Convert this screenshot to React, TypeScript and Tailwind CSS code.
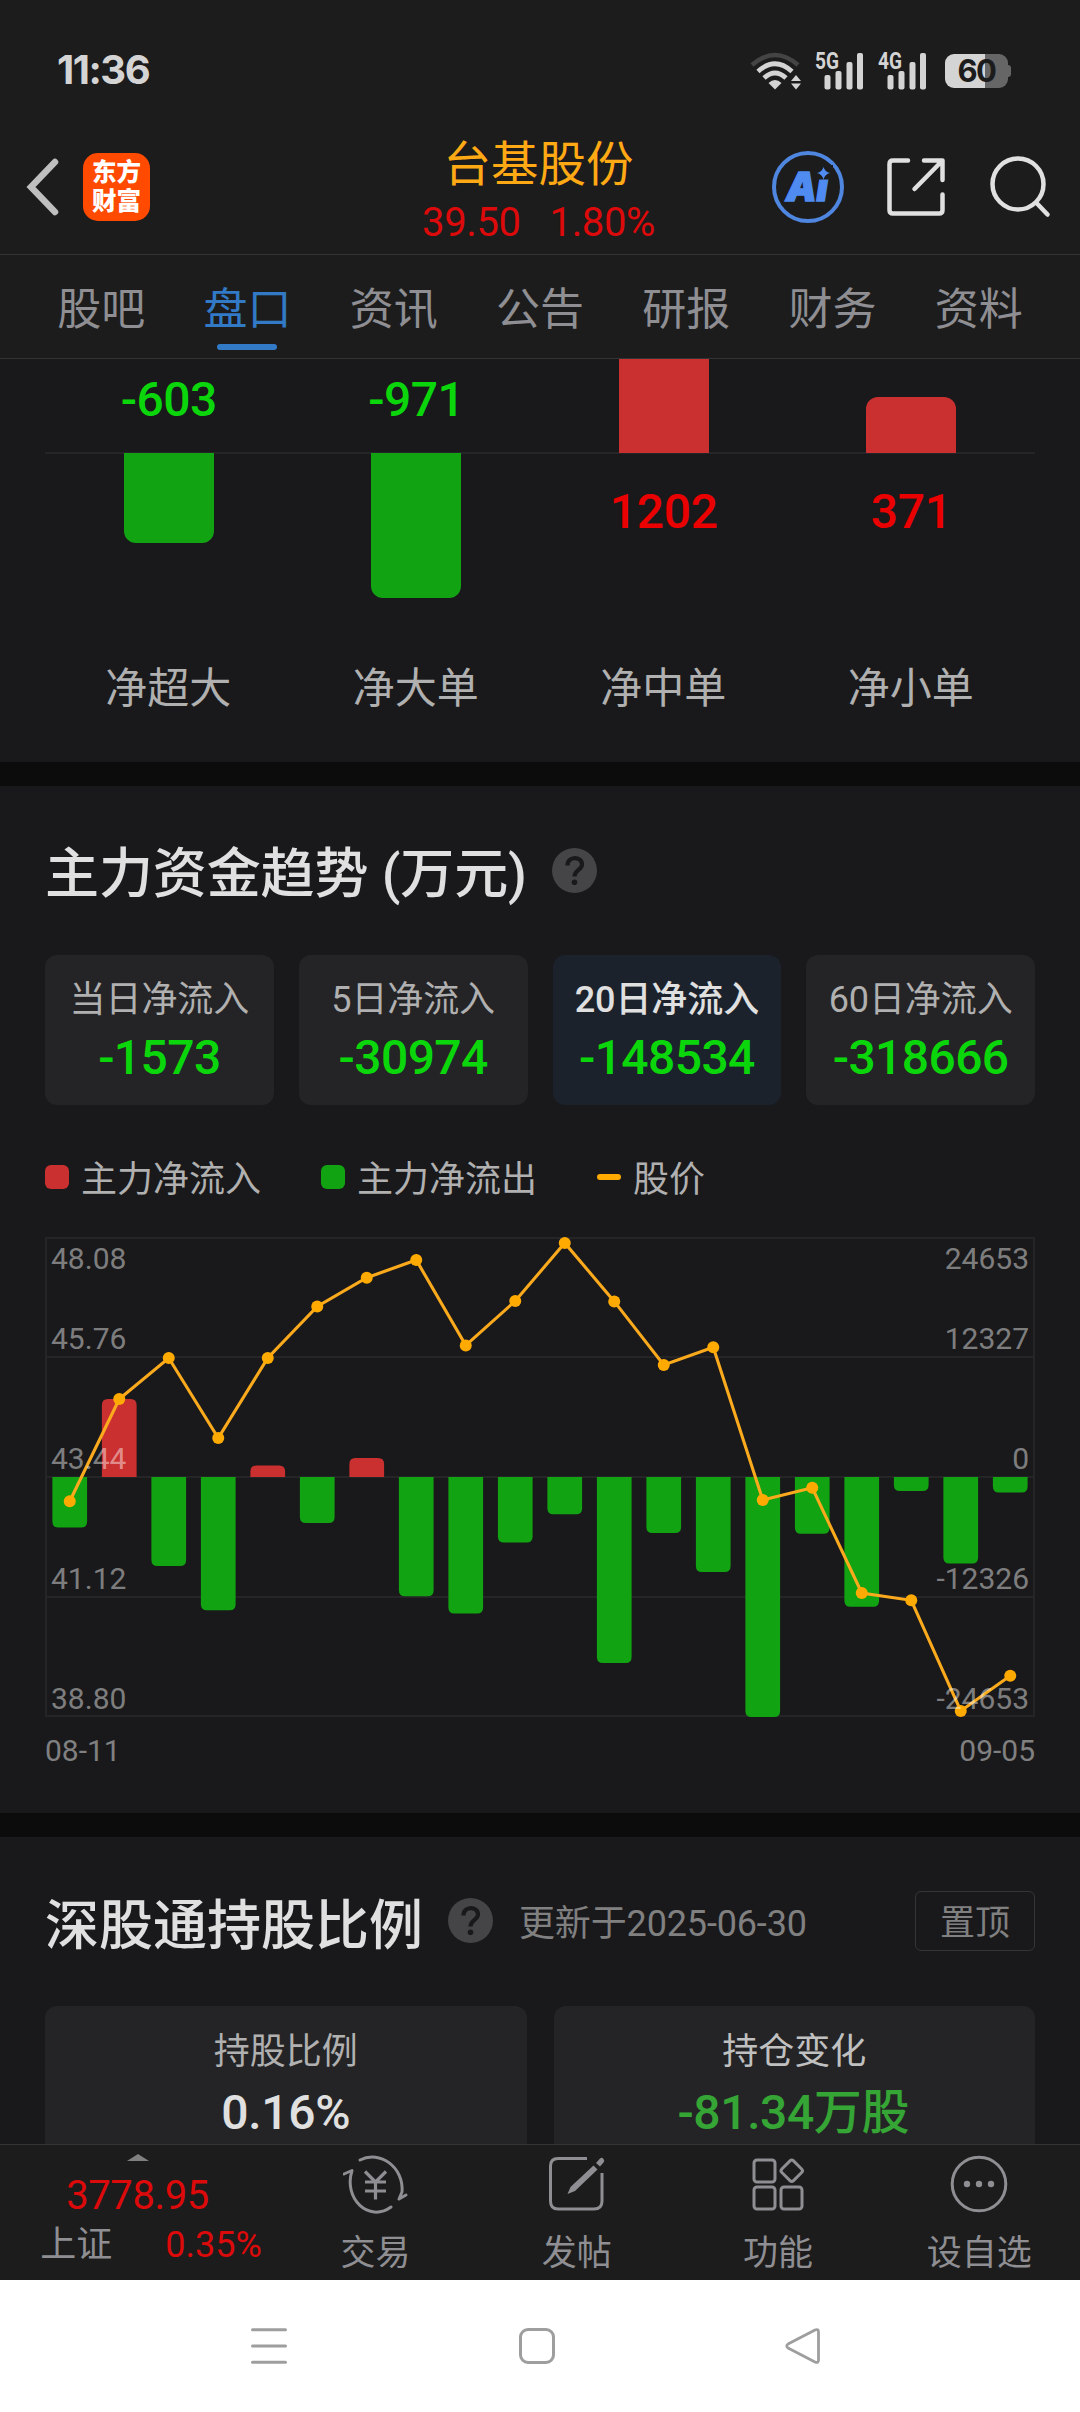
import React from 'react';
import clsx from 'clsx';

const GREEN = '#12a312';
const RED = '#cb3030';
const ORANGE = '#ffaa00';

const tabs = ['股吧', '盘口', '资讯', '公告', '研报', '财务', '资料'];

const orders = [
  { label: '净超大', value: -603, size: 90 },
  { label: '净大单', value: -971, size: 145 },
  { label: '净中单', value: 1202, size: 180 },
  { label: '净小单', value: 371, size: 56 },
];

const periods = [
  { label: '当日净流入', value: '-1573' },
  { label: '5日净流入', value: '-30974' },
  { label: '20日净流入', value: '-148534', active: true },
  { label: '60日净流入', value: '-318666' },
];

// y offsets inside the 990x480 chart, one entry per trading day
const flowEnds = [
  290.6, 162, 329, 373.3, 228.6, 286, 221, 359.2, 376.4, 305.5,
  277.2, 426.1, 296, 335, 480, 296.7, 369.8, 254, 326.6, 255.4,
];
const pricePoints = [
  264.2, 162, 121, 201, 121, 69.4, 40.7, 23, 108.4, 64,
  6, 64.4, 128, 110.3, 263, 250.8, 356, 363.3, 474, 438.7,
];
const axisRows = [
  { y: 32, left: '48.08', right: '24653' },
  { y: 112, left: '45.76', right: '12327' },
  { y: 232, left: '43.44', right: '0' },
  { y: 352, left: '41.12', right: '-12326' },
  { y: 472, left: '38.80', right: '-24653' },
];

const StatusBar: React.FC = () => (
  <div className="flex h-[140px] shrink-0 items-center justify-between pl-[57px] pr-[69px] text-[#d4d4d4]">
    <span className="font-['Inter'] text-[40px] font-bold leading-[44px] tracking-[-1.5px]">11:36</span>
    <div className="flex items-center pt-0.5">
      <svg width="52" height="38" viewBox="0 0 52 38" fill="none">
        <path d="M2 13 Q25 -7 48 13" stroke="#444" strokeWidth="4.500" />
        <path d="M8 19.500 Q25 4 42 19.500" stroke="#d4d4d4" strokeWidth="4.800" />
        <path d="M14 26 Q25 16 36 26" stroke="#d4d4d4" strokeWidth="4.800" />
        <path d="M18.500 31 Q25 25 31.500 31 L25 37.500 Z" fill="#d4d4d4" />
        <path d="M46 23 L51 29 H41 Z M46 37.500 L51 31.500 H41 Z" fill="#d4d4d4" />
      </svg>
      <Signal label="5G" />
      <Signal label="4G" />
      <div className="ml-[17px] flex items-center">
        <div className="flex h-[34px] w-[63px] items-center justify-center rounded-[9px] bg-linear-to-r from-[#d4d4d4] from-63% to-[#666] to-63%">
          <span className="font-['Inter'] text-[31px] font-bold leading-[34px] tracking-[-1.5px] text-[#1c1c1c]">60</span>
        </div>
        <div className="h-3 w-[3px] rounded-r bg-[#666]" />
      </div>
    </div>
  </div>
);

const Signal = ({ label }: { label: string }) => (
  <svg width="50" height="50" viewBox="0 -6 50 50" className="ml-[13px] overflow-visible">
    <text x="0" y="17" fontFamily="Roboto" fontSize="23" fontWeight="700" textLength="24" lengthAdjust="spacingAndGlyphs" fill="#d4d4d4">
      {label}
    </text>
    <g fill="#d4d4d4">
      <rect x="9.500" y="23" width="6" height="14.500" rx="2" />
      <rect x="20.500" y="19" width="6" height="18.500" rx="2" />
      <rect x="31.500" y="10" width="6" height="27.500" rx="2" />
      <rect x="42" y="1" width="6" height="36.500" rx="2" />
    </g>
  </svg>
);

const Header: React.FC = () => (
  <div className="grid h-[115px] shrink-0 grid-cols-[1fr_auto_1fr] border-b border-[#333] pl-[26px] pr-[29px]">
    <div className="flex items-center gap-[23px] pb-5">
      <svg width="34" height="58" viewBox="0 0 34 58" fill="none" stroke="#bfbfbf" strokeWidth="6.500">
        <path d="M29 4 L5 29 L29 54" strokeLinecap="round" />
      </svg>
      <div className="flex h-[68px] w-[67px] flex-col items-center justify-center rounded-[15px] bg-[#ff4a00] text-[24.500px] font-black leading-[29px] text-white">
        <span>东方</span>
        <span>财富</span>
      </div>
    </div>
    <div className="flex flex-col items-center">
      <div className="text-[47.500px] leading-[50px] text-[#ffa915]">台基股份</div>
      <div className="mt-[13px] flex gap-[29px] text-[40px] leading-10 tracking-[-0.4px] text-[#dc0a0a]">
        <span>39.50</span>
        <span>1.80%</span>
      </div>
    </div>
    <div className="flex items-center justify-end pb-5">
      <svg width="72" height="72" viewBox="0 0 72 72">
        <circle cx="36" cy="36" r="34" fill="none" stroke="#4f86df" strokeWidth="4" />
        <text x="14" y="49.500" fontFamily="Inter" fontSize="40" fontWeight="900" fontStyle="italic" textLength="42" lengthAdjust="spacingAndGlyphs" fill="#4f8bf0" stroke="#4f8bf0" strokeWidth="1.500">
          Ai
        </text>
        <rect x="43" y="14" width="18" height="14.500" fill="#1c1c1c" />
        <path d="M51.500 16 Q53 21 58 22 Q53 23 51.500 28.500 Q50 23 45 22 Q50 21 51.500 16 Z" fill="#4f8bf0" />
      </svg>
      <svg width="60" height="60" viewBox="0 0 60 60" fill="none" stroke="#e0e0e0" strokeWidth="4.500" strokeLinecap="round" strokeLinejoin="round" className="ml-[42px]">
        <path d="M22 3.500 H7 Q3.500 3.500 3.500 7 V53 Q3.500 56.500 7 56.500 H53 Q56.500 56.500 56.500 53 V37.500" />
        <path d="M38 3.500 H56.500 V23 M56 4 L28.500 32" />
      </svg>
      <svg width="61" height="62" viewBox="0 0 61 62" fill="none" stroke="#e0e0e0" strokeWidth="4.500" strokeLinecap="round" className="ml-11">
        <circle cx="28" cy="28" r="25.500" />
        <path d="M47 47.500 L57.500 58.500" />
      </svg>
    </div>
  </div>
);

const TabBar: React.FC = () => (
  <div className="grid h-[104px] shrink-0 grid-cols-7 border-b border-[#333] px-7">
    {tabs.map((tab, i) => (
      <div key={tab} className={clsx('flex flex-col items-center pt-[25px] text-[44px] leading-[60px]', i === 1 ? 'text-[#3279c6]' : 'text-[#8e8e93]')}>
        {tab}
        {i === 1 && <div className="mt-1 h-1.5 w-[60px] rounded-full bg-[#3279c6]" />}
      </div>
    ))}
  </div>
);

const OrderFlow: React.FC = () => (
  <section className="grid h-[403px] shrink-0 grid-cols-4 overflow-hidden px-[45px]">
    {orders.map(({ label, value, size }) => (
      <div key={label} className="text-center">
        <div className="flex h-[93px] justify-center">
          {value < 0 ? (
            <div className="mt-[17px] text-5xl font-medium leading-[48px] tracking-[-0.5px] text-[#0bd60b]">{value}</div>
          ) : (
            <div className="relative -mb-px w-[90px] shrink-0 self-end rounded-t-xl bg-[#cb3030]" style={{ height: size }} />
          )}
        </div>
        <div className="flex h-[211px] justify-center border-t-2 border-[#252527]">
          {value < 0 ? (
            <div className="relative -mt-px w-[90px] rounded-b-xl bg-[#12a312]" style={{ height: size }} />
          ) : (
            <div className="mt-[34px] text-5xl font-medium leading-[48px] tracking-[-0.3px] text-[#ea0000]">{value}</div>
          )}
        </div>
        <div className="pr-px text-[42px] leading-[52px] text-[#b0b0b0]">{label}</div>
      </div>
    ))}
  </section>
);

const HelpIcon = ({ className }: { className?: string }) => (
  <svg width="45" height="45" viewBox="0 0 45 45" fill="none" className={className}>
    <circle cx="22.500" cy="22.500" r="22.500" fill="#454548" />
    <path d="M15.500 17.500 C15.500 7.500 30 8 30 16.500 C30 22 22.500 22 22.500 28.500" stroke="#19191b" strokeWidth="4.200" />
    <circle cx="22.500" cy="34.200" r="2.800" fill="#19191b" />
  </svg>
);

// bar growing from the zero line, rounded only at its far end
const barPath = (i: number, end: number) => {
  const x = i * 49.5 + 7.4;
  const w = 34.7;
  const zero = 240;
  const r = end < zero ? 6 : -6;
  return `M${x} ${zero} V${end + r} Q${x} ${end} ${x + 6} ${end} H${x + w - 6} Q${x + w} ${end} ${x + w} ${end + r} V${zero} Z`;
};

const TrendChart: React.FC = () => (
  <svg width="990" height="480" viewBox="0 0 990 480" className="mt-[35px] block overflow-visible">
    <g stroke="#252527" strokeWidth="2" fill="none">
      <rect x="1" y="1" width="988" height="478" />
      <path d="M0 120 H990 M0 240 H990 M0 360 H990" />
    </g>
    {flowEnds.map((end, i) => (
      <path key={i} d={barPath(i, end)} fill={end < 240 ? RED : GREEN} />
    ))}
    <polyline
      points={pricePoints.map((y, i) => `${i * 49.5 + 24.75},${y}`).join(' ')}
      fill="none"
      stroke="#fbaa1d"
      strokeWidth="3.100"
    />
    {pricePoints.map((y, i) => (
      <circle key={i} cx={i * 49.5 + 24.75} cy={y} r="6" fill={ORANGE} />
    ))}
    <g fontSize="30" fill="#ffffff" fillOpacity="0.45">
      {axisRows.map(({ y, left, right }) => (
        <g key={y}>
          <text x="6" y={y}>{left}</text>
          <text x="984" y={y} textAnchor="end">{right}</text>
        </g>
      ))}
    </g>
  </svg>
);

const FundTrend: React.FC = () => (
  <section className="h-[1027px] shrink-0 px-[45px] pt-[59px]">
    <div className="flex h-[60px] items-center">
      <h2 className="text-[54px] font-medium leading-[60px] tracking-[-0.1px] text-[#e0e0e0]">主力资金趋势 (万元)</h2>
      <HelpIcon className="mb-2.5 ml-[25px]" />
    </div>

    <div className="mt-[50px] grid grid-cols-4 gap-[25px]">
      {periods.map(({ label, value, active }) => (
        <div key={label} className={clsx('h-[150px] rounded-xl pt-[23px] text-center', active ? 'bg-[#1b222c]' : 'bg-[#242426]')}>
          <div className={clsx('whitespace-nowrap text-4xl leading-[44px] tracking-[-0.1px]', active ? 'font-medium text-[#e0e0e0]' : 'text-[#b0b0b0]')}>{label}</div>
          <div className="mt-3 text-5xl font-medium leading-[48px] tracking-[-0.6px] text-[#0bd60b]">{value}</div>
        </div>
      ))}
    </div>

    <div className="mt-[53px] flex h-11 items-center gap-[60px] text-4xl leading-[44px] text-[#b0b0b0]">
      <div className="flex items-center gap-3">
        <div className="mb-1.5 size-6 rounded-md bg-[#cb3030]" />
        主力净流入
      </div>
      <div className="flex items-center gap-3">
        <div className="mb-1.5 size-6 rounded-md bg-[#12a312]" />
        主力净流出
      </div>
      <div className="flex items-center gap-3">
        <div className="mb-1.5 h-1.5 w-6 rounded-sm bg-[#ffaa00]" />
        股价
      </div>
    </div>

    <TrendChart />
    <div className="mt-4 flex justify-between text-[30px] leading-9 text-[#808081]">
      <span>08-11</span>
      <span>09-05</span>
    </div>
  </section>
);

const Holdings: React.FC = () => (
  <section className="min-h-0 flex-1 overflow-hidden px-[45px] pt-[60px]">
    <div className="flex h-[60px] items-center">
      <h2 className="text-[54px] font-medium leading-[60px] text-[#e0e0e0]">深股通持股比例</h2>
      <HelpIcon className="mb-[13px] ml-[25px]" />
      <span className="mb-1.5 ml-[26px] text-4xl leading-[44px] tracking-[-0.15px] text-[#808081]">更新于2025-06-30</span>
      <button className="mb-3 ml-auto h-[60px] w-[120px] shrink-0 rounded-md border border-[#353537] pt-1.5 text-[35px] leading-[44px] text-[#808081]">置顶</button>
    </div>
    <div className="mt-[49px] grid grid-cols-2 gap-[27px] text-center">
      <div className="h-[180px] rounded-xl bg-[#242426] pt-6">
        <div className="text-4xl leading-[44px] text-[#b0b0b0]">持股比例</div>
        <div className="mt-[15px] text-5xl font-medium leading-[48px] tracking-[-0.3px] text-[#e0e0e0]">0.16%</div>
      </div>
      <div className="h-[180px] rounded-xl bg-[#242426] pt-6">
        <div className="text-4xl leading-[44px] text-[#c0c0c0]">持仓变化</div>
        <div className="mt-[15px] pr-0.5 text-5xl font-medium leading-[48px] tracking-[-0.4px] text-[#35a535]">-81.34万股</div>
      </div>
    </div>
  </section>
);

const actions = [
  {
    label: '交易',
    icon: (
      <>
        <path d="M17 6 C37 -4 61 13 59 38 L56 45 L63 41" />
        <path d="M1 20 L9 16.500 C0 45 26 69 48 53" />
        <path d="M22 17.500 L32.500 28 L43 17.500 M22 28 H43 M22 37 H43 M32.500 28 V45.500" strokeWidth="3.200" strokeLinecap="butt" />
      </>
    ),
  },
  {
    label: '发帖',
    icon: (
      <>
        <path d="M43 4.500 H14 Q6.500 4.500 6.500 12 V47 Q6.500 55 14 55 H50 Q58 55 58 47 V19" strokeLinecap="butt" />
        <path d="M49.500 11.500 L53.500 15.500 L31 37 L23.500 40 L26.500 33 Z M52 9 L56 4.500 Q58 3 59.500 5 Q61 7 59.500 8.500 L56 12.500 Z" fill="#8e8e93" stroke="none" />
      </>
    ),
  },
  {
    label: '功能',
    icon: (
      <>
        <rect x="9" y="6" width="21" height="22" rx="3" />
        <rect x="9" y="33" width="21" height="22" rx="3" />
        <rect x="36" y="33" width="21" height="22" rx="3" />
        <rect x="38.500" y="8.500" width="16.500" height="16.500" rx="2.500" transform="rotate(45 46.750 16.750)" />
      </>
    ),
  },
  {
    label: '设自选',
    icon: (
      <>
        <circle cx="33" cy="30" r="26.800" />
        <g fill="#8e8e93" stroke="none">
          <circle cx="21" cy="30" r="3.200" />
          <circle cx="33" cy="30" r="3.200" />
          <circle cx="45" cy="30" r="3.200" />
        </g>
      </>
    ),
  },
];

const BottomBar: React.FC = () => (
  <div className="flex h-[136px] shrink-0 border-t border-[#333] bg-[#1c1c1c] text-[#8e8e93]">
    <div className="flex w-[275px] flex-col items-center pt-[9px]">
      <svg width="22" height="7" viewBox="0 0 22 7">
        <path d="M0 7 L11 0 L22 7 Z" fill="#808081" />
      </svg>
      <div className="mt-[15px] text-[40px] leading-10 tracking-[-0.4px] text-[#dc0a0a]">3778.95</div>
      <div className="mt-[9px] flex gap-[53px] pl-[27px] text-4xl leading-10">
        <span>上证</span>
        <span className="text-[#dc0a0a]">0.35%</span>
      </div>
    </div>
    {actions.map(({ label, icon }) => (
      <div key={label} className="flex flex-1 flex-col items-center pt-[9px]">
        <svg width="66" height="60" viewBox="0 0 66 60" fill="none" stroke="#8e8e93" strokeWidth="3" strokeLinecap="round" strokeLinejoin="round">
          {icon}
        </svg>
        <span className="mt-[22px] text-[35px] leading-9">{label}</span>
      </div>
    ))}
  </div>
);

const SystemNav: React.FC = () => (
  <div className="flex h-[132px] shrink-0 items-center bg-white pl-[251px]">
    <svg width="36" height="36" viewBox="0 0 36 36" stroke="#9e9e9e" strokeWidth="3" strokeLinecap="round">
      <path d="M1.500 1.700 H34.500 M1.500 18 H34.500 M1.500 34.300 H34.500" />
    </svg>
    <div className="ml-[232px] size-9 rounded-[9px] border-[3px] border-[#9e9e9e]" />
    <svg width="36" height="36" viewBox="0 0 36 36" fill="none" stroke="#9e9e9e" strokeWidth="2.800" strokeLinejoin="round" className="ml-[230px]">
      <path d="M30 2 Q33.500 0.500 33.500 4 V32 Q33.500 35.500 30 34 L3 20 Q0.500 18 3 16 Z" />
    </svg>
  </div>
);

const App: React.FC = () => (
  <div className="flex h-[2412px] w-[1080px] flex-col overflow-hidden bg-[#19191b] font-['Roboto','Noto_Sans_CJK_SC',sans-serif]">
    <div className="shrink-0 bg-[#1c1c1c]">
      <StatusBar />
      <Header />
      <TabBar />
    </div>
    <OrderFlow />
    <div className="h-6 shrink-0 bg-[#0c0c0c]" />
    <FundTrend />
    <div className="h-6 shrink-0 bg-[#0c0c0c]" />
    <Holdings />
    <BottomBar />
    <SystemNav />
  </div>
);

export default App;
